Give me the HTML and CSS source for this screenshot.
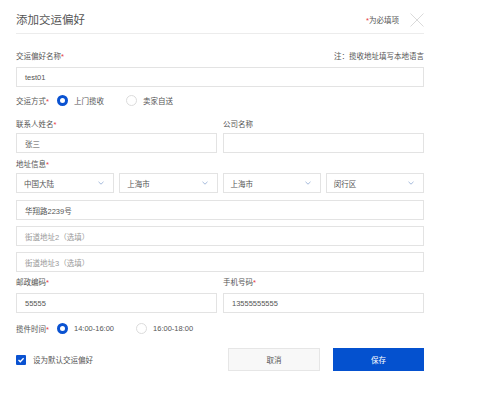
FILE: index.html
```html
<!DOCTYPE html>
<html lang="zh-CN">
<head>
<meta charset="utf-8">
<title>添加交运偏好</title>
<link rel="stylesheet" href="styles.css">
</head>
<body>
<div class="dialog">
  <div class="header">
    <div class="title">添加交运偏好</div>
    <div class="header-right">
      <span class="req-note"><span class="star">*</span>为必填项</span>
      <svg class="close" width="14" height="14" viewBox="0 0 14 14"><path d="M0.5 0.5 L13.5 13.5 M13.5 0.5 L0.5 13.5" stroke="#dadada" stroke-width="1" fill="none"/></svg>
    </div>
  </div>

  <div class="field first">
    <div class="label-row">
      <span class="label">交运偏好名称<span class="star">*</span></span>
      <span class="note">注：揽收地址填写本地语言</span>
    </div>
    <div class="input">test01</div>
  </div>

  <div class="radio-row r1">
    <span class="radio-label">交运方式<span class="star">*</span></span>
    <span class="option"><span class="radio checked"></span><span>上门揽收</span></span>
    <span class="option"><span class="radio"></span><span>卖家自送</span></span>
  </div>

  <div class="grid2 g1">
    <div class="field">
      <div class="label">联系人姓名<span class="star">*</span></div>
      <div class="input">张三</div>
    </div>
    <div class="field">
      <div class="label">公司名称</div>
      <div class="input"></div>
    </div>
  </div>

  <div class="field addr">
    <div class="label">地址信息<span class="star">*</span></div>
    <div class="selects">
      <div class="select"><span>中国大陆</span><svg width="6" height="4" viewBox="0 0 6 4"><path d="M0.5 0.8 L3 3.2 L5.5 0.8" stroke="#9bb3d8" stroke-width="0.9" fill="none"/></svg></div>
      <div class="select"><span>上海市</span><svg width="6" height="4" viewBox="0 0 6 4"><path d="M0.5 0.8 L3 3.2 L5.5 0.8" stroke="#9bb3d8" stroke-width="0.9" fill="none"/></svg></div>
      <div class="select"><span>上海市</span><svg width="6" height="4" viewBox="0 0 6 4"><path d="M0.5 0.8 L3 3.2 L5.5 0.8" stroke="#9bb3d8" stroke-width="0.9" fill="none"/></svg></div>
      <div class="select"><span>闵行区</span><svg width="6" height="4" viewBox="0 0 6 4"><path d="M0.5 0.8 L3 3.2 L5.5 0.8" stroke="#9bb3d8" stroke-width="0.9" fill="none"/></svg></div>
    </div>
  </div>

  <div class="input street s1">华翔路2239号</div>
  <div class="input street placeholder">街道地址2（选填）</div>
  <div class="input street placeholder">街道地址3（选填）</div>

  <div class="grid2 g2">
    <div class="field">
      <div class="label">邮政编码<span class="star">*</span></div>
      <div class="input">55555</div>
    </div>
    <div class="field">
      <div class="label">手机号码<span class="star">*</span></div>
      <div class="input">13555555555</div>
    </div>
  </div>

  <div class="radio-row r2">
    <span class="radio-label">揽件时间<span class="star">*</span></span>
    <span class="option"><span class="radio checked"></span><span>14:00-16:00</span></span>
    <span class="option"><span class="radio"></span><span>16:00-18:00</span></span>
  </div>

  <div class="footer">
    <div class="check-wrap">
      <span class="checkbox"><svg width="10" height="10" viewBox="0 0 10 10"><path d="M2.5 5 L4.3 6.8 L7.6 3.3" stroke="#fff" stroke-width="1.3" fill="none"/></svg></span>
      <span>设为默认交运偏好</span>
    </div>
    <div class="btn cancel">取消</div>
    <div class="btn save">保存</div>
  </div>
</div>
</body>
</html>
```

FILE: styles.css
```css
* { box-sizing: border-box; }
body {
  margin: 0;
  background: #fff;
  font-family: "Liberation Sans", "Noto Sans CJK SC", sans-serif;
  color: #555;
  font-size: 7.5px;
}
.dialog {
  width: 440px;
  padding: 0 16px;
}
.header {
  height: 34px;
  padding-top: 6px;
  border-bottom: 1px solid #ececec;
  display: flex;
  align-items: center;
  justify-content: space-between;
}
.title {
  font-size: 11.5px;
  color: #555;
  line-height: 14px;
}
.header-right {
  display: flex;
  align-items: center;
}
.req-note {
  font-size: 7.5px;
  color: #555;
}
.close {
  margin-left: 11px;
  display: block;
}
.star { color: #e4393c; }
.field.first { margin-top: 18px; }
.label-row {
  display: flex;
  justify-content: space-between;
  line-height: 10px;
}
.label {
  line-height: 10px;
  color: #555;
}
.note { color: #555; }
.input {
  height: 20px;
  border: 1px solid #e3e3e3;
  padding: 0 8px;
  display: flex;
  align-items: center;
  color: #555;
}
.field.first .input { margin-top: 5px; }
.radio-row {
  display: flex;
  align-items: center;
  height: 14px;
  color: #555;
}
.r1 { margin-top: 6px; }
.r2 { margin-top: 8px; }
.radio-label { width: 41px; }
.option {
  display: flex;
  align-items: center;
  gap: 6px;
  margin-right: 22px;
}
.radio {
  width: 11px;
  height: 11px;
  border-radius: 50%;
  border: 1px solid #dcdcdc;
  background: #fff;
}
.radio.checked { border: 3px solid #0a52d1; }
.grid2 {
  display: grid;
  grid-template-columns: 1fr 1fr;
  column-gap: 6px;
}
.grid2 .input { margin-top: 3px; }
.g1 { margin-top: 13px; }
.g2 { margin-top: 6px; }
.g2 .input { margin-top: 5px; }
.addr { margin-top: 7px; }
.selects {
  margin-top: 3px;
  display: flex;
  gap: 5px;
}
.select {
  flex: 1;
  height: 20px;
  border: 1px solid #e3e3e3;
  padding: 0 9px 0 7px;
  display: flex;
  align-items: center;
  justify-content: space-between;
  color: #555;
}
.select svg { display: block; }
.street { margin-top: 6px; }
.street.s1 { margin-top: 7px; }
.placeholder { color: #999; }
.footer {
  margin-top: 13px;
  display: flex;
  align-items: center;
}
.check-wrap {
  flex: 1;
  display: flex;
  align-items: center;
  gap: 7px;
  color: #555;
}
.checkbox {
  width: 10px;
  height: 10px;
  background: #0a52d1;
  border-radius: 1px;
  display: block;
}
.checkbox svg { display: block; }
.btn {
  height: 23px;
  display: flex;
  align-items: center;
  justify-content: center;
}
.cancel {
  width: 92px;
  background: #f8f8f8;
  border: 1px solid #e6e6e6;
  color: #555;
  margin-right: 13px;
}
.save {
  width: 91px;
  background: #0451cf;
  color: #fff;
}
```
